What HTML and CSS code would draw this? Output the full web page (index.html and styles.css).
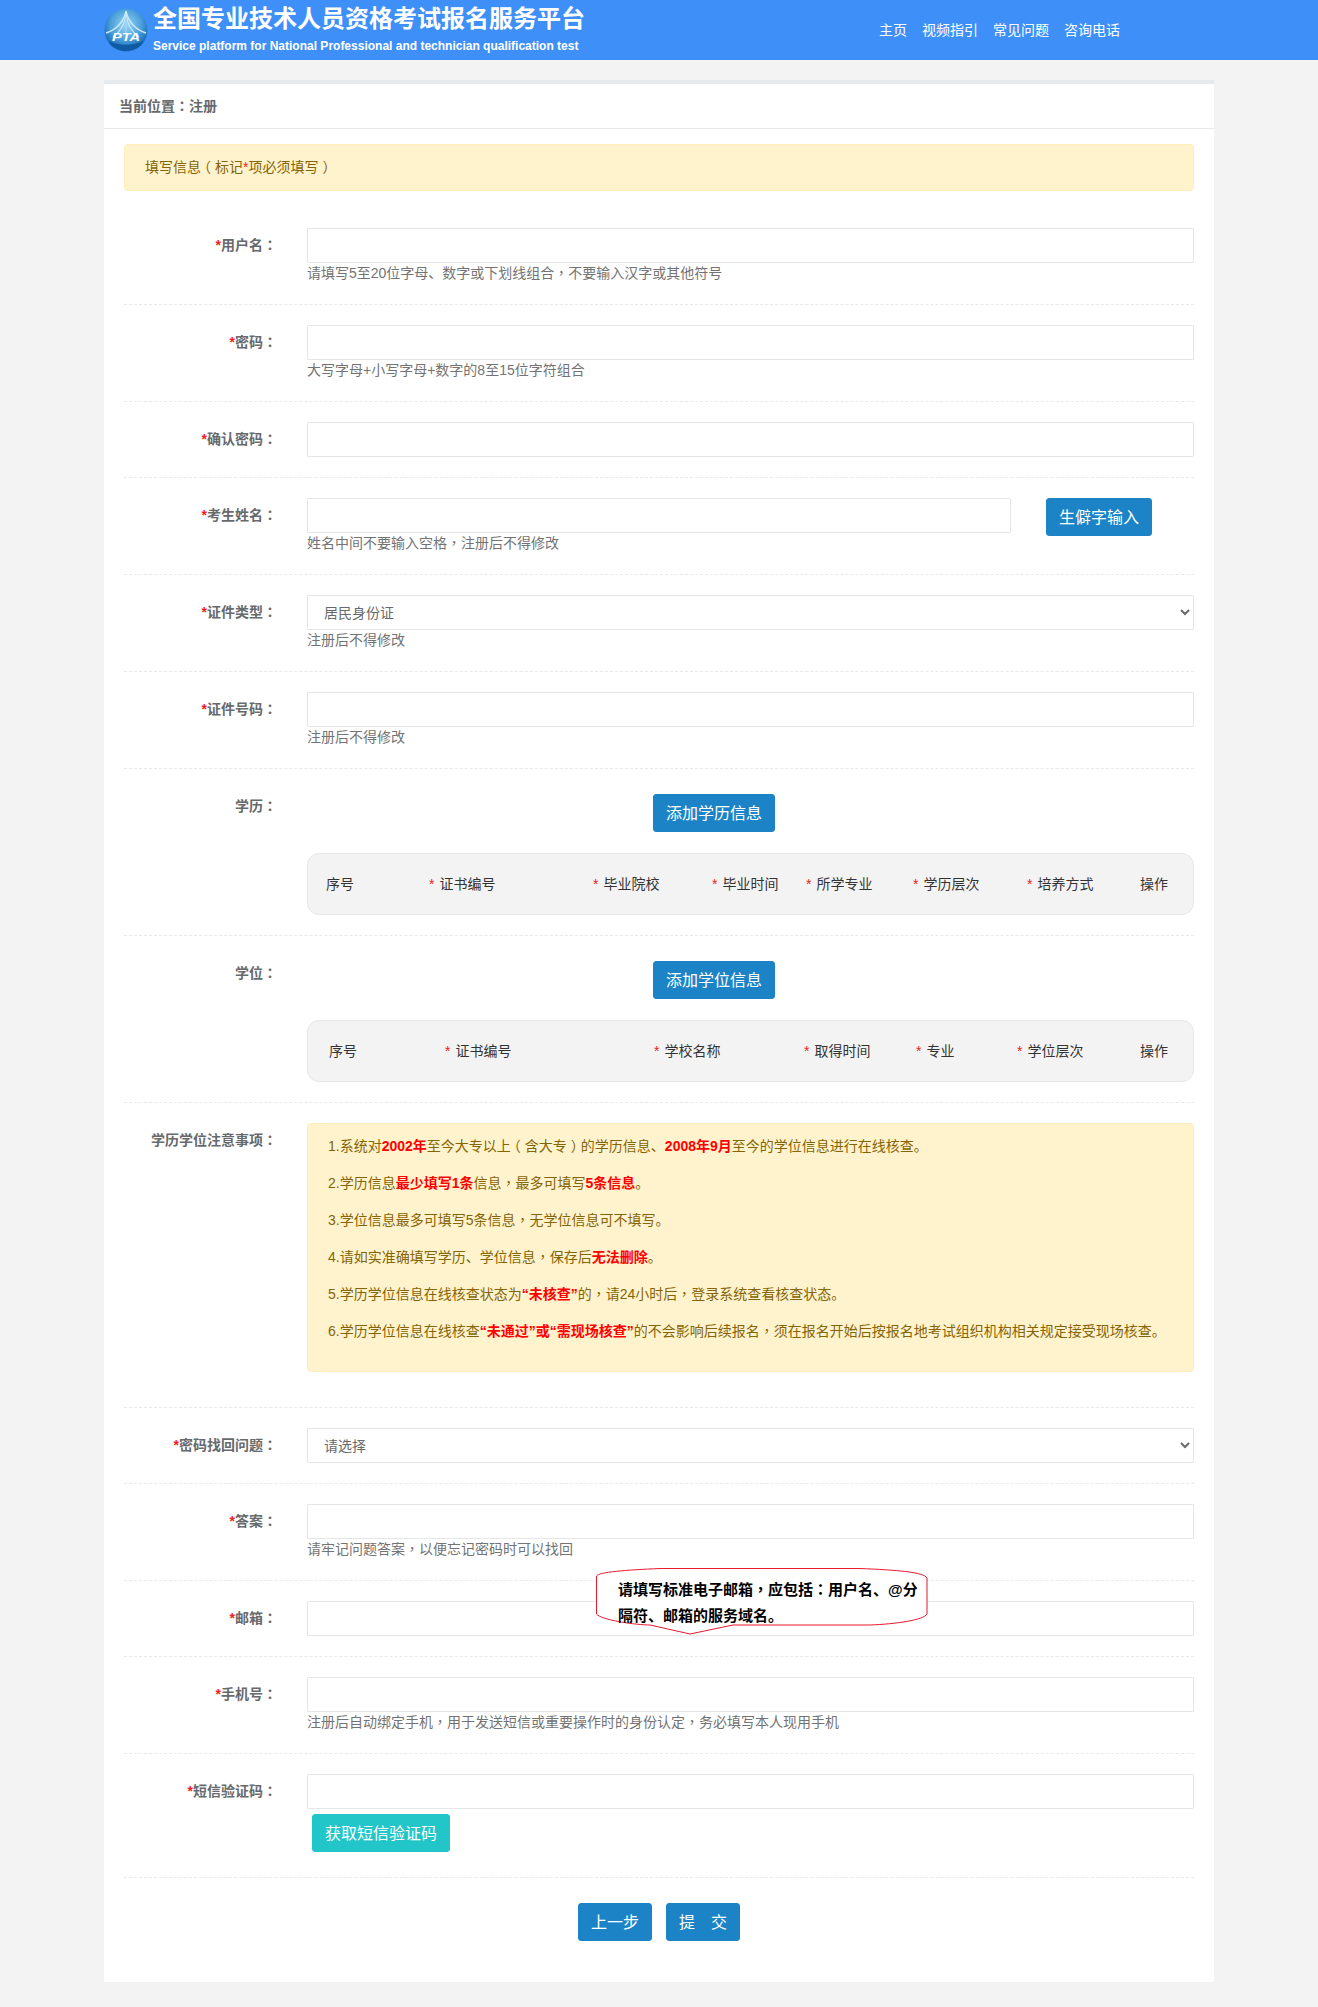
FILE: index.html
```html
<!DOCTYPE html>
<html lang="zh-CN">
<head>
    <meta charset="UTF-8">
    <meta name="viewport" content="width=device-width, initial-scale=1.0">
    <title>全国专业技术人员资格考试报名服务平台</title>
    <link rel="stylesheet" href="styles.css">
</head>
<body>
    <div class="top">
        <div class="top-in">
            <svg class="logo" viewBox="0 0 44 44" width="44" height="44">
                <defs>
                    <radialGradient id="ball" cx="50%" cy="38%" r="60%">
                        <stop offset="0" stop-color="#9ad6f4"/>
                        <stop offset="0.6" stop-color="#4a9fdc"/>
                        <stop offset="1" stop-color="#1264b0"/>
                    </radialGradient>
                </defs>
                <circle cx="22" cy="22" r="21.5" fill="url(#ball)"/>
                <path d="M22 3C20 14 12 22 2 25M22 3C24 14 32 22 42 25" fill="none" stroke="#cfeaf9" stroke-width="1.4"/>
                <path d="M22 6C21 16 16 24 9 29M22 6C23 16 28 24 35 29" fill="none" stroke="#cfeaf9" stroke-width="1.2"/>
                <path d="M22 8V26" stroke="#a8d8f2" stroke-width="1"/>
                <path d="M5 33C15 38 29 38 39 33L38 36C30 45 14 45 6 36Z" fill="#0e5aa5"/>
                <text x="22" y="33" class="logo-txt" textLength="28" lengthAdjust="spacingAndGlyphs">PTA</text>
            </svg>
            <div class="brand">
                <div class="brand-cn">全国专业技术人员资格考试报名服务平台</div>
                <div class="brand-en">Service platform for National Professional and technician qualification test</div>
            </div>
            <div class="nav">
                <a href="#">主页</a>
                <a href="#">视频指引</a>
                <a href="#">常见问题</a>
                <a href="#">咨询电话</a>
            </div>
        </div>
    </div>

    <div class="card">
        <div class="crumb">当前位置<span class="mid" lang="zh-TW">：</span>注册</div>
        <div class="card-body">
            <div class="alert">填写信息<span class="pl">（</span>标记<span class="star">*</span>项必须填写<span class="pr">）</span></div>

            <div class="row">
                <label class="lab"><span class="star">*</span>用户名<span class="mid" lang="zh-TW">：</span></label>
                <div class="field">
                    <input class="ctl" type="text">
                    <div class="help">请填写5至20位字母、数字或下划线组合<span class="mid" lang="zh-TW">，</span>不要输入汉字或其他符号</div>
                </div>
            </div>

            <div class="row">
                <label class="lab"><span class="star">*</span>密码<span class="mid" lang="zh-TW">：</span></label>
                <div class="field">
                    <input class="ctl" type="password">
                    <div class="help">大写字母+小写字母+数字的8至15位字符组合</div>
                </div>
            </div>

            <div class="row">
                <label class="lab"><span class="star">*</span>确认密码<span class="mid" lang="zh-TW">：</span></label>
                <div class="field">
                    <input class="ctl" type="password">
                </div>
            </div>

            <div class="row">
                <label class="lab"><span class="star">*</span>考生姓名<span class="mid" lang="zh-TW">：</span></label>
                <div class="field name-field">
                    <div class="name-left">
                        <input class="ctl" type="text">
                        <div class="help">姓名中间不要输入空格<span class="mid" lang="zh-TW">，</span>注册后不得修改</div>
                    </div>
                    <button class="btn" type="button">生僻字输入</button>
                </div>
            </div>

            <div class="row">
                <label class="lab"><span class="star">*</span>证件类型<span class="mid" lang="zh-TW">：</span></label>
                <div class="field">
                    <select class="ctl"><option>居民身份证</option></select>
                    <div class="help">注册后不得修改</div>
                </div>
            </div>

            <div class="row">
                <label class="lab"><span class="star">*</span>证件号码<span class="mid" lang="zh-TW">：</span></label>
                <div class="field">
                    <input class="ctl" type="text">
                    <div class="help">注册后不得修改</div>
                </div>
            </div>

            <div class="row">
                <label class="lab">学历<span class="mid" lang="zh-TW">：</span></label>
                <div class="field">
                    <button class="btn add-btn" type="button">添加学历信息</button>
                    <div class="tbl-box">
                        <table class="tbl tbl-edu">
                            <tr>
                                <th>序号</th>
                                <th><span class="t-star">*</span>证书编号</th>
                                <th><span class="t-star">*</span>毕业院校</th>
                                <th><span class="t-star">*</span>毕业时间</th>
                                <th><span class="t-star">*</span>所学专业</th>
                                <th><span class="t-star">*</span>学历层次</th>
                                <th><span class="t-star">*</span>培养方式</th>
                                <th>操作</th>
                            </tr>
                        </table>
                    </div>
                </div>
            </div>

            <div class="row">
                <label class="lab">学位<span class="mid" lang="zh-TW">：</span></label>
                <div class="field">
                    <button class="btn add-btn" type="button">添加学位信息</button>
                    <div class="tbl-box">
                        <table class="tbl tbl-deg">
                            <tr>
                                <th>序号</th>
                                <th><span class="t-star">*</span>证书编号</th>
                                <th><span class="t-star">*</span>学校名称</th>
                                <th><span class="t-star">*</span>取得时间</th>
                                <th><span class="t-star">*</span>专业</th>
                                <th><span class="t-star">*</span>学位层次</th>
                                <th>操作</th>
                            </tr>
                        </table>
                    </div>
                </div>
            </div>

            <div class="row">
                <label class="lab">学历学位注意事项<span class="mid" lang="zh-TW">：</span></label>
                <div class="field">
                    <div class="notes">
                        <p>1.系统对<b>2002年</b>至今大专以上<span class="pl">（</span>含大专<span class="pr">）</span>的学历信息、<b>2008年9月</b>至今的学位信息进行在线核查。</p>
                        <p>2.学历信息<b>最少填写1条</b>信息<span class="mid" lang="zh-TW">，</span>最多可填写<b>5条信息</b>。</p>
                        <p>3.学位信息最多可填写5条信息<span class="mid" lang="zh-TW">，</span>无学位信息可不填写。</p>
                        <p>4.请如实准确填写学历、学位信息<span class="mid" lang="zh-TW">，</span>保存后<b>无法删除</b>。</p>
                        <p>5.学历学位信息在线核查状态为<b>“未核查”</b>的<span class="mid" lang="zh-TW">，</span>请24小时后<span class="mid" lang="zh-TW">，</span>登录系统查看核查状态。</p>
                        <p>6.学历学位信息在线核查<b>“未通过”或“需现场核查”</b>的不会影响后续报名<span class="mid" lang="zh-TW">，</span>须在报名开始后按报名地考试组织机构相关规定接受现场核查。</p>
                    </div>
                </div>
            </div>

            <div class="row">
                <label class="lab"><span class="star">*</span>密码找回问题<span class="mid" lang="zh-TW">：</span></label>
                <div class="field">
                    <select class="ctl"><option>请选择</option></select>
                </div>
            </div>

            <div class="row">
                <label class="lab"><span class="star">*</span>答案<span class="mid" lang="zh-TW">：</span></label>
                <div class="field">
                    <input class="ctl" type="text">
                    <div class="help">请牢记问题答案<span class="mid" lang="zh-TW">，</span>以便忘记密码时可以找回</div>
                </div>
            </div>

            <div class="row mail-row">
                <label class="lab"><span class="star">*</span>邮箱<span class="mid" lang="zh-TW">：</span></label>
                <div class="field">
                    <input class="ctl" type="text">
                </div>
                <div class="tip">
                    <svg class="tip-shape" viewBox="0 0 332 67" width="332" height="67">
                        <path d="M.5 8C3 4 30 2 64 .5H264C300 2 328 4 331 10V46C328 52 300 56 274 57H137L94 66 54 57C40 57 5 52 .5 46Z" fill="#fff" stroke="#e8192c"/>
                    </svg>
                    <div class="tip-txt">请填写标准电子邮箱<span class="mid" lang="zh-TW">，</span>应包括<span class="mid" lang="zh-TW">：</span>用户名、@分<br>隔符、邮箱的服务域名。</div>
                </div>
            </div>

            <div class="row">
                <label class="lab"><span class="star">*</span>手机号<span class="mid" lang="zh-TW">：</span></label>
                <div class="field">
                    <input class="ctl" type="text">
                    <div class="help">注册后自动绑定手机<span class="mid" lang="zh-TW">，</span>用于发送短信或重要操作时的身份认定<span class="mid" lang="zh-TW">，</span>务必填写本人现用手机</div>
                </div>
            </div>

            <div class="row">
                <label class="lab"><span class="star">*</span>短信验证码<span class="mid" lang="zh-TW">：</span></label>
                <div class="field">
                    <input class="ctl" type="text">
                    <button class="btn sms-btn" type="button">获取短信验证码</button>
                </div>
            </div>

            <div class="foot">
                <button class="btn" type="button">上一步</button>
                <button class="btn" type="button">提　交</button>
            </div>
        </div>
    </div>
</body>
</html>
```

FILE: styles.css
```css
* {
    box-sizing: border-box;
}

body {
    margin: 0;
    background: #f3f3f3;
    font-family: "Liberation Sans", "Noto Sans CJK SC", sans-serif;
    font-size: 14px;
    line-height: 21px;
    color: #676a6c;
}

/* centred full-width punctuation */
.mid {
    font-family: "Liberation Sans", "Noto Sans CJK TC", sans-serif;
}

.pl {
    margin-left: -4px;
    margin-right: 4px;
}

.pr {
    margin-left: 4px;
    margin-right: -4px;
}

.top {
    height: 60px;
    background: #3f8ff8;
}

.top-in {
    width: 1110px;
    height: 60px;
    margin: 0 auto;
    display: flex;
    align-items: flex-start;
}

.logo {
    margin-top: 8px;
    margin-right: 5px;
}

.logo-txt {
    font-size: 10px;
    font-weight: bold;
    font-style: italic;
    text-anchor: middle;
    fill: #fff;
}

.brand {
    margin-top: 1px;
    color: #fff;
    font-weight: bold;
}

.brand-cn {
    font-size: 24px;
    line-height: 36px;
}

.brand-en {
    font-size: 12px;
    line-height: 18px;
}

.nav {
    margin-left: auto;
    margin-right: 94px;
    display: flex;
    gap: 15px;
    line-height: 60px;
}

.nav a {
    color: #fff;
    text-decoration: none;
}

.card {
    width: 1110px;
    margin: 20px auto 25px;
    background: #fff;
    border-top: 4px solid #e7eaec;
}

.crumb {
    height: 45px;
    padding: 12px 15px 0;
    border-bottom: 1px solid #e7eaec;
    font-weight: bold;
}

.card-body {
    padding: 15px 20px 41px;
}

.alert {
    height: 47px;
    padding: 12px 20px;
    margin-bottom: 17px;
    background: #fff3cd;
    border: 1px solid #ffeeba;
    border-radius: 4px;
    color: #856404;
}

.star {
    color: #ed1c24;
}

.row {
    position: relative;
    display: flex;
    padding: 20px 0;
    border-bottom: 1px dashed #e7eaec;
}

.lab {
    width: 153px;
    margin-right: 30px;
    flex-shrink: 0;
    padding-top: 7px;
    text-align: right;
    font-weight: bold;
}

.field {
    width: 887px;
}

.ctl {
    display: block;
    width: 100%;
    height: 35px;
    padding: 6px 12px;
    border: 1px solid #e5e6e7;
    border-radius: 1px;
    background: #fff;
    color: #676a6c;
    font: inherit;
}

.help {
    color: #737373;
}

.name-field {
    display: flex;
    align-items: flex-start;
}

.name-left {
    width: 704px;
    margin-right: 35px;
}

.btn {
    height: 38px;
    padding: 0 12px 2px;
    border: 1px solid #1c84c6;
    border-radius: 3px;
    background: #1c84c6;
    color: #fff;
    font-family: inherit;
    font-size: 16px;
}

.add-btn {
    display: block;
    margin: 5px 0 21px 346px;
}

.sms-btn {
    display: block;
    margin: 5px 0 5px 5px;
    background: #23c6c8;
    border-color: #23c6c8;
}

.tbl-box {
    height: 62px;
    background: #f3f3f3;
    border: 1px solid #e7e7e7;
    border-radius: 12px;
}

.tbl {
    width: 885px;
    height: 60px;
    border-collapse: collapse;
    table-layout: fixed;
}

.tbl th {
    padding: 0 0 0 18px;
    text-align: left;
    font-weight: normal;
    color: #333;
}

.t-star {
    color: #ed1c24;
    margin-right: 5px;
}

.tbl-edu th:nth-child(1) { width: 103px; }
.tbl-edu th:nth-child(2) { width: 164px; }
.tbl-edu th:nth-child(3) { width: 119px; }
.tbl-edu th:nth-child(4) { width: 94px; }
.tbl-edu th:nth-child(5) { width: 107px; }
.tbl-edu th:nth-child(6) { width: 114px; }
.tbl-edu th:nth-child(7) { width: 113px; }

.tbl-deg th:nth-child(1) { width: 119px; padding-left: 21px; }
.tbl-deg th:nth-child(2) { width: 209px; }
.tbl-deg th:nth-child(3) { width: 150px; }
.tbl-deg th:nth-child(4) { width: 112px; }
.tbl-deg th:nth-child(5) { width: 101px; }
.tbl-deg th:nth-child(6) { width: 123px; }

.notes {
    height: 249px;
    margin-bottom: 15px;
    padding: 12px 20px 0;
    background: #fff3cd;
    border: 1px solid #ffeeba;
    border-radius: 4px;
    color: #856404;
}

.notes p {
    margin: 0 0 17px;
    line-height: 20px;
}

.notes b {
    color: #f00;
}

.tip {
    position: absolute;
    left: 472px;
    top: -13px;
    width: 332px;
    height: 67px;
}

.tip-shape {
    position: absolute;
    left: 0;
    top: 0;
}

.tip-txt {
    position: relative;
    width: 302px;
    margin-left: 22px;
    padding-top: 9px;
    font-size: 15px;
    font-weight: bold;
    line-height: 26px;
    color: #000;
}

.foot {
    padding-top: 25px;
    display: flex;
    justify-content: center;
    gap: 14px;
}
```
